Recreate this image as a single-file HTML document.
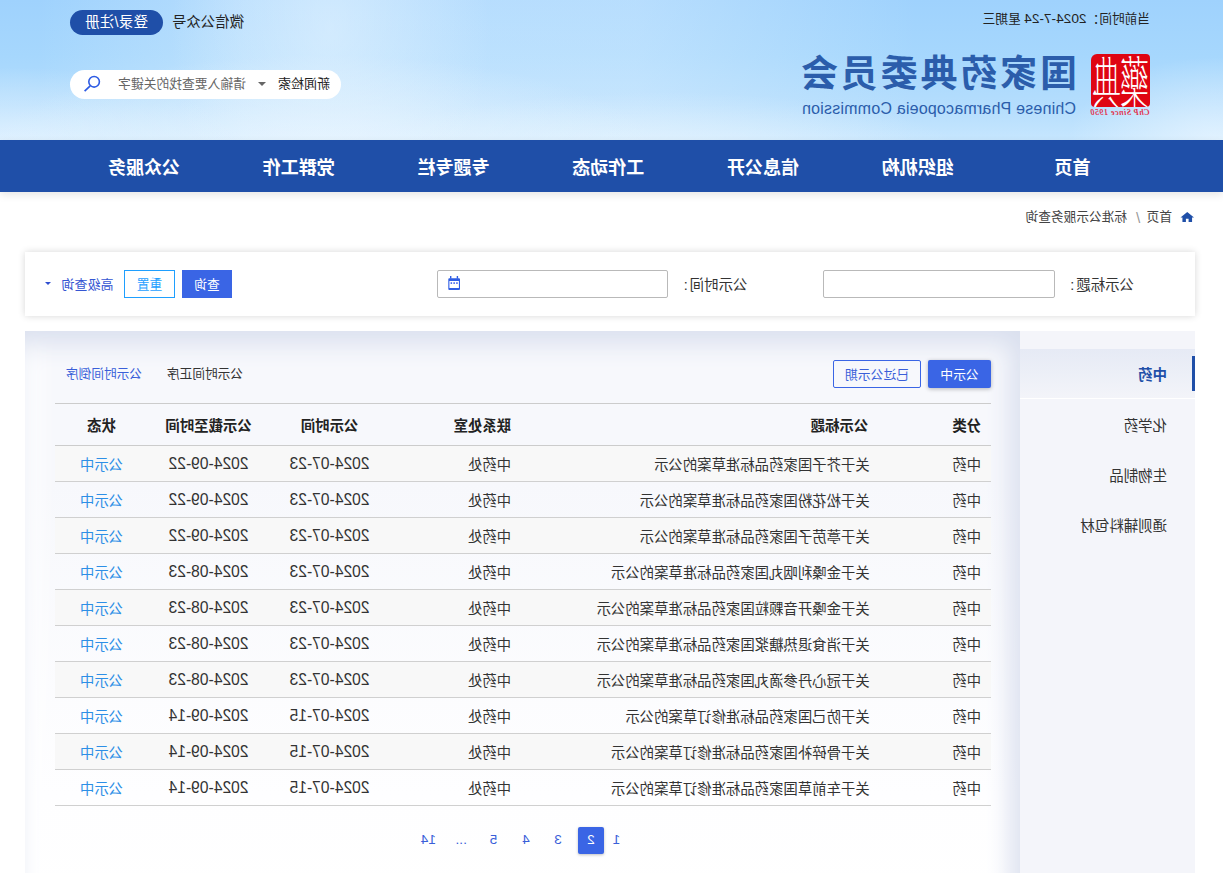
<!DOCTYPE html>
<html lang="zh-CN">
<head>
<meta charset="utf-8">
<title>标准公示服务查询 - 国家药典委员会</title>
<style>
*{box-sizing:border-box;margin:0;padding:0}
html,body{width:1223px;height:873px;overflow:hidden;background:#fff}
body{font-family:"Liberation Sans","Noto Sans CJK SC",sans-serif;font-size:14px;color:#333}
#flip{position:absolute;left:0;top:0;width:1223px;height:873px;overflow:hidden;transform:scaleX(-1);transform-origin:50% 50%;background:#fff}
.abs{position:absolute;white-space:nowrap}
.n{font-family:"Noto Sans CJK SC","Liberation Sans",sans-serif}

/* header */
#hd{left:0;top:0;width:1223px;height:140px;
 background:
  radial-gradient(ellipse 160px 240px at 893px 30px,rgba(235,246,255,.5),rgba(235,246,255,0) 100%),
  radial-gradient(ellipse 340px 100px at 900px 155px,rgba(235,246,255,.8),rgba(235,246,255,0) 100%),
  radial-gradient(ellipse 230px 85px at 1215px 152px,rgba(235,246,255,.75),rgba(235,246,255,0) 100%),
  radial-gradient(ellipse 300px 60px at 560px 152px,rgba(235,246,255,.6),rgba(235,246,255,0) 100%),
  radial-gradient(ellipse 150px 85px at 5px 142px,rgba(235,246,255,.75),rgba(235,246,255,0) 100%),
  linear-gradient(90deg,rgba(235,246,255,0) 25%,rgba(235,246,255,.32) 48%,rgba(235,246,255,.3) 80%,rgba(235,246,255,0) 97%),
  linear-gradient(180deg,#9fd2fd 0%,#a6d7fd 40%,#b4ddfd 75%,#c6e6fe 100%)}
#time{left:73px;top:9px;font-size:12.7px;line-height:20px;color:#222}
#seal{left:73px;top:54px;width:59px;height:52.5px;background:#df0512;border-radius:4px 6px 4px 4px;overflow:hidden}
#seal span{position:absolute;top:-9px;font-family:"Noto Serif CJK SC",serif;font-weight:200;color:#fff;font-size:29px;line-height:36px;transform:scaleY(1.95);transform-origin:50% 0}
#since{left:73.5px;top:108px;font-family:"Liberation Serif",serif;font-style:italic;font-weight:700;font-size:8px;line-height:10px;color:#e2304a;letter-spacing:.5px}
#cn{left:146px;top:50px;font-size:37px;line-height:50px;font-weight:700;color:#2b5dab;letter-spacing:2.8px;font-family:"Liberation Sans","Noto Sans CJK SC",sans-serif}
#en{left:147px;top:99px;font-size:16px;line-height:20px;color:#2b5dab;letter-spacing:.2px}
#login{left:1060.3px;top:10px;width:92.7px;height:25px;border-radius:13px;background:#1f4fa8;color:#fff;font-size:14.4px;letter-spacing:.3px;line-height:25px;text-align:center}
#wx{left:979px;top:12px;font-size:14.4px;line-height:20px;color:#222}
#sbox{left:882px;top:70px;width:271px;height:29px;border-radius:15px;background:#fff}
#sbox .t1{left:11px;top:4px;font-size:13px;line-height:20px;color:#222}
#sbox .car{left:75px;top:12px;width:0;height:0;border-left:4px solid transparent;border-right:4px solid transparent;border-top:4.5px solid #666}
#sbox .ph{left:95px;top:4px;font-size:12.8px;line-height:20px;color:#666}
#sbox svg{position:absolute;left:240px;top:5px}

/* nav */
#nav{left:0;top:140px;width:1223px;height:52px;background:#1f4fa8;box-shadow:0 3px 8px rgba(0,0,0,.1)}
#nav a{position:absolute;top:0;width:154.75px;height:52px;line-height:56px;text-align:center;color:#fff;font-size:18px;font-weight:700;text-decoration:none}

/* breadcrumb */
#bc{left:29px;top:207px;font-size:12.7px;line-height:20px;color:#444}
#bc svg{position:absolute;left:0;top:4.5px}
#bc .a{position:absolute;left:22px;top:0}
#bc .s{position:absolute;left:53.7px;top:.8px;color:#999;font-size:15px}
#bc .b{position:absolute;left:67px;top:0}

/* search panel */
#sp{left:28px;top:252px;width:1170px;height:64px;background:#fff;box-shadow:0 0 7px rgba(0,0,0,.16)}
.lab{font-size:14.45px;line-height:20px;color:#333;top:23px}
.inp{top:18px;height:28px;border:1px solid #b9b9b9;border-radius:2px;background:#fff}
.btn{top:18px;height:28px;line-height:30px;text-align:center;font-size:12.7px}

/* side */
#side{left:28px;top:331px;width:175px;height:542px;background:#f4f5fa}
#side .it{position:absolute;left:0;width:175px;height:50px;line-height:50px;padding-left:28px;font-size:14.45px;color:#333}
#side .on{background:linear-gradient(180deg,#e6eaf5 0%,#eceff7 50%,#f3f4f9 100%);color:#1f4fa8;font-weight:700;border-bottom:1px solid #fff}
#side .bar{position:absolute;left:0;top:25px;width:3px;height:35px;background:#1f4fa8}

/* main */
#main{left:203px;top:331px;width:995px;height:580px;background:linear-gradient(180deg,#f7f8fc 0%,#f7f8fc 26%,#fefeff 80%,#fff 100%);
 box-shadow:inset 9px 12px 26px #d9dfee, inset -12px -12px 26px #fff}
.tab{top:360px;height:28px;line-height:29.4px;text-align:center;font-size:12.8px;border-radius:2px}
.sort{top:364px;font-size:12.7px;line-height:20px}
table{position:absolute;left:232px;top:403px;width:936px;border-collapse:collapse;table-layout:fixed;font-size:14.38px;color:#333}
th{height:42px;border-top:1px solid #ccc;border-bottom:1px solid #ccc;font-weight:700;color:#222;text-align:left;padding:0 10px;white-space:nowrap}
td{height:36px;border-bottom:1px solid #d0d0d0;padding:0 10px;white-space:nowrap;text-align:left}
tbody tr:nth-child(odd) td{background:#f8f8f8}
.c{text-align:center;padding:0}
.st{color:#2d8fe6}
.d{font-size:15.65px}
.pg{top:830px;width:26px;height:20px;line-height:20px;text-align:center;font-size:13.6px;color:#3a5fd9}
</style>
</head>
<body>
<div id="flip">

<div id="hd" class="abs"></div>
<div id="time" class="abs">当前时间：<span style="font-size:13.7px">2024-7-24</span> 星期三</div>
<div id="seal" class="abs"><span style="left:1px">藥</span><span style="left:29px">典</span></div>
<div id="since" class="abs">ChP Since 1950</div>
<div id="cn" class="abs">国家药典委员会</div>
<div id="en" class="abs">Chinese Pharmacopoeia Commission</div>
<div id="wx" class="abs">微信公众号</div>
<div id="login" class="abs">登录/注册</div>
<div id="sbox" class="abs">
  <div class="abs t1">新闻检索</div>
  <div class="abs car"></div>
  <div class="abs ph">请输入要查找的关键字</div>
  <svg width="18" height="18" viewBox="0 0 18 18"><circle cx="6.9" cy="6.8" r="5.3" fill="none" stroke="#2d5be3" stroke-width="1.6"/><path d="M10.8 10.9 L16.4 16.1" stroke="#2d5be3" stroke-width="1.7"/></svg>
</div>

<div id="nav" class="abs">
  <a style="left:73.2px">首页</a>
  <a style="left:227.95px">组织机构</a>
  <a style="left:382.7px">信息公开</a>
  <a style="left:537.45px">工作动态</a>
  <a style="left:692.2px">专题专栏</a>
  <a style="left:846.95px">党群工作</a>
  <a style="left:1001.7px">公众服务</a>
</div>

<div id="bc" class="abs">
  <svg width="13.5" height="10.3" viewBox="0 0 14 11" preserveAspectRatio="none"><path d="M7 0 L0 6 H2 V11 H5.6 V7.2 H8.4 V11 H12 V6 H14 Z" fill="#1f4fa8"/></svg>
  <span class="a">首页</span><span class="s">/</span><span class="b">标准公示服务查询</span>
</div>

<div id="sp" class="abs">
  <div class="abs lab" style="left:61px">公示标题<span style="margin-left:2px">:</span></div>
  <div class="abs inp" style="left:140px;width:232px"></div>
  <div class="abs lab" style="left:447.6px">公示时间<span style="margin-left:2px">:</span></div>
  <div class="abs inp" style="left:527px;width:231px">
    <svg style="position:absolute;left:207.2px;top:4.9px" width="12" height="14" viewBox="0 0 12 14"><path fill-rule="evenodd" fill="#2f5de4" d="M1 2.2 H10.7 Q11.7 2.2 11.7 3.2 V12.9 Q11.7 13.9 10.7 13.9 H1 Q0 13.9 0 12.9 V3.2 Q0 2.2 1 2.2 Z M1.1 4.9 V11.9 H10.6 V4.9 Z"/><rect x="1.9" y="0" width="1.4" height="2.6" fill="#2f5de4"/><rect x="8.6" y="0" width="1.4" height="2.6" fill="#2f5de4"/><rect x="2.3" y="6.2" width="1.5" height="1.8" fill="#4a6cf0"/><rect x="5.1" y="6.2" width="1.5" height="1.8" fill="#4a6cf0"/><rect x="7.9" y="6.2" width="1.5" height="1.8" fill="#4a6cf0"/></svg>
  </div>
  <div class="abs btn" style="left:963px;width:50px;background:#3a65e5;color:#fff">查询</div>
  <div class="abs btn" style="left:1020px;width:51px;border:1px solid #1e9fff;color:#1e9fff;line-height:28px">重置</div>
  <div class="abs" style="left:1081.4px;top:22.7px;font-size:13px;line-height:20px;color:#3556d2">高级查询</div>
  <div class="abs" style="left:1144.3px;top:29.8px;width:0;height:0;border-left:3.9px solid transparent;border-right:3.9px solid transparent;border-top:3.4px solid #2f4fd0"></div>
</div>

<div id="main" class="abs"></div>
<div id="side" class="abs">
  <div class="it on" style="top:18px;line-height:52px">中药</div>
  <div class="bar"></div>
  <div class="it" style="top:70px">化学药</div>
  <div class="it" style="top:120px">生物制品</div>
  <div class="it" style="top:170px">通则辅料包材</div>
</div>

<div class="abs tab" style="left:232px;width:63px;background:#3a65e5;color:#fff;box-shadow:0 1px 4px rgba(0,0,0,.28)">公示中</div>
<div class="abs tab" style="left:302px;width:88px;border:1px solid #3a65e5;color:#3a5fd9;line-height:27.4px">已过公示期</div>
<div class="abs sort" style="left:980px;color:#333">公示时间正序</div>
<div class="abs sort" style="left:1081px;color:#3a5fd9">公示时间倒序</div>

<table>
<colgroup><col style="width:111.3px"><col style="width:358.7px"><col style="width:131px"><col style="width:121px"><col style="width:121px"><col style="width:93px"></colgroup>
<thead><tr><th>分类</th><th style="padding-left:11.5px">公示标题</th><th>联系处室</th><th class="c">公示时间</th><th class="c">公示截至时间</th><th class="c">状态</th></tr></thead>
<tbody>
<tr><td>中药</td><td>关于芥子国家药品标准草案的公示</td><td>中药处</td><td class="c d">2024-07-23</td><td class="c d">2024-09-22</td><td class="c st">公示中</td></tr>
<tr><td>中药</td><td>关于松花粉国家药品标准草案的公示</td><td>中药处</td><td class="c d">2024-07-23</td><td class="c d">2024-09-22</td><td class="c st">公示中</td></tr>
<tr><td>中药</td><td>关于葶苈子国家药品标准草案的公示</td><td>中药处</td><td class="c d">2024-07-23</td><td class="c d">2024-09-22</td><td class="c st">公示中</td></tr>
<tr><td>中药</td><td>关于金嗓利咽丸国家药品标准草案的公示</td><td>中药处</td><td class="c d">2024-07-23</td><td class="c d">2024-08-23</td><td class="c st">公示中</td></tr>
<tr><td>中药</td><td>关于金嗓开音颗粒国家药品标准草案的公示</td><td>中药处</td><td class="c d">2024-07-23</td><td class="c d">2024-08-23</td><td class="c st">公示中</td></tr>
<tr><td>中药</td><td>关于消食退热糖浆国家药品标准草案的公示</td><td>中药处</td><td class="c d">2024-07-23</td><td class="c d">2024-08-23</td><td class="c st">公示中</td></tr>
<tr><td>中药</td><td>关于冠心丹参滴丸国家药品标准草案的公示</td><td>中药处</td><td class="c d">2024-07-23</td><td class="c d">2024-08-23</td><td class="c st">公示中</td></tr>
<tr><td>中药</td><td>关于防己国家药品标准修订草案的公示</td><td>中药处</td><td class="c d">2024-07-15</td><td class="c d">2024-09-14</td><td class="c st">公示中</td></tr>
<tr><td>中药</td><td>关于骨碎补国家药品标准修订草案的公示</td><td>中药处</td><td class="c d">2024-07-15</td><td class="c d">2024-09-14</td><td class="c st">公示中</td></tr>
<tr><td>中药</td><td>关于车前草国家药品标准修订草案的公示</td><td>中药处</td><td class="c d">2024-07-15</td><td class="c d">2024-09-14</td><td class="c st">公示中</td></tr>
</tbody>
</table>

<div class="abs pg" style="left:593.6px">1</div>
<div class="abs" style="left:619px;top:827px;width:26px;height:26.5px;background:#3a65e5;border-radius:2px;box-shadow:0 1px 3px rgba(0,0,0,.25)"></div>
<div class="abs pg" style="left:619px;color:#fff">2</div>
<div class="abs pg" style="left:652px">3</div>
<div class="abs pg" style="left:684.1px">4</div>
<div class="abs pg" style="left:716.5px">5</div>
<div class="abs pg" style="left:748.8px;color:#3a5fd9">...</div>
<div class="abs pg" style="left:781.7px">14</div>

</div>
</body>
</html>
